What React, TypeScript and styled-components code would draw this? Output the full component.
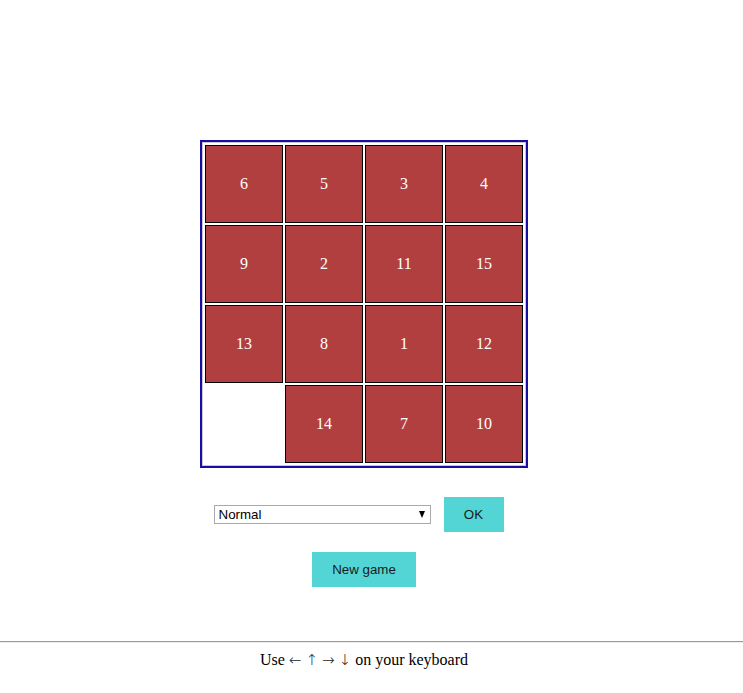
import React from "react";
import styled, { createGlobalStyle } from "styled-components";

const Global = createGlobalStyle`
  html, body { margin: 0; padding: 0; background: #fff; }
  body { font-family: "Liberation Serif", "Times New Roman", serif; }
`;

const Page = styled.div`
  width: 743px;
`;

const Column = styled.div`
  width: 728px;
  display: flex;
  flex-direction: column;
  align-items: center;
`;

const Board = styled.div`
  margin-top: 140px;
  border: 2px solid #1a0ca6;
`;

const Frame = styled.div`
  border: 1px solid #c9c9c9;
  display: grid;
  grid-template-columns: repeat(4, 80px);
  grid-auto-rows: 80px;
  padding: 1px;
  width: fit-content;
`;

const Tile = styled.div<{ $empty?: boolean }>`
  margin: 1px;
  width: 76px;
  height: 76px;
  border: 1px solid ${(p) => (p.$empty ? "transparent" : "#000")};
  background: ${(p) => (p.$empty ? "transparent" : "#b13f3f")};
  color: #fff;
  font-family: "Liberation Serif", "Times New Roman", serif;
  font-size: 16px;
  display: flex;
  align-items: center;
  justify-content: center;
`;

const Controls = styled.div`
  margin-top: 29px;
  display: flex;
  align-items: center;
  gap: 13px;
  padding-right: 11px;
`;

const SelectWrap = styled.div`
  position: relative;
  width: 217px;
  height: 19px;
`;

const Select = styled.select`
  appearance: none;
  -webkit-appearance: none;
  box-sizing: border-box;
  width: 100%;
  height: 100%;
  margin: 0;
  border: 1px solid #a9a9a9;
  border-radius: 0;
  background: #fff;
  padding: 0 0 0 4px;
  font-family: "Liberation Sans", Arial, sans-serif;
  font-size: 13.33px;
  color: #000;
  outline: none;
`;

const Caret = styled.span`
  position: absolute;
  right: 6px;
  top: 6px;
  width: 0;
  height: 0;
  border-left: 3.5px solid transparent;
  border-right: 3.5px solid transparent;
  border-top: 7px solid #000;
  pointer-events: none;
`;

const Button = styled.button<{ $w: number }>`
  width: ${(p) => p.$w}px;
  height: 35px;
  border: none;
  margin: 0;
  padding: 0;
  background: #53d5d5;
  color: #1a1a1a;
  font-family: "Liberation Sans", Arial, sans-serif;
  font-size: 13.33px;
  cursor: pointer;
`;

const NewGameRow = styled.div`
  margin-top: 20px;
  display: flex;
  justify-content: center;
`;

const Rule = styled.hr`
  margin: 54px 0 0 0;
  border: none;
  border-top: 1px solid #9a9a9a;
  border-bottom: 1px solid #eeeeee;
  height: 0;
`;

const Footer = styled.div`
  width: 728px;
  padding-top: 8px;
  text-align: center;
  font-family: "Liberation Serif", "Times New Roman", serif;
  font-size: 16px;
  color: #000;
`;

const Arrow = styled.span`
  font-family: "DejaVu Sans", sans-serif;
  font-size: 15px;
  font-weight: 300;
  color: #222;
`;

const tiles: (number | null)[] = [6, 5, 3, 4, 9, 2, 11, 15, 13, 8, 1, 12, null, 14, 7, 10];

export default function App() {
  return (
    <Page>
      <Global />
      <Column>
        <Board>
          <Frame>
            {tiles.map((t, i) => (
              <Tile key={i} $empty={t === null}>
                {t ?? ""}
              </Tile>
            ))}
          </Frame>
        </Board>
        <Controls>
          <SelectWrap>
            <Select defaultValue="normal">
              <option value="easy">Easy</option>
              <option value="normal">Normal</option>
              <option value="hard">Hard</option>
            </Select>
            <Caret />
          </SelectWrap>
          <Button $w={60}>OK</Button>
        </Controls>
        <NewGameRow>
          <Button $w={104}>New game</Button>
        </NewGameRow>
      </Column>
      <Rule />
      <Footer>
        Use <Arrow>←</Arrow> <Arrow>↑</Arrow> <Arrow>→</Arrow> <Arrow>↓</Arrow> on your keyboard
      </Footer>
    </Page>
  );
}
